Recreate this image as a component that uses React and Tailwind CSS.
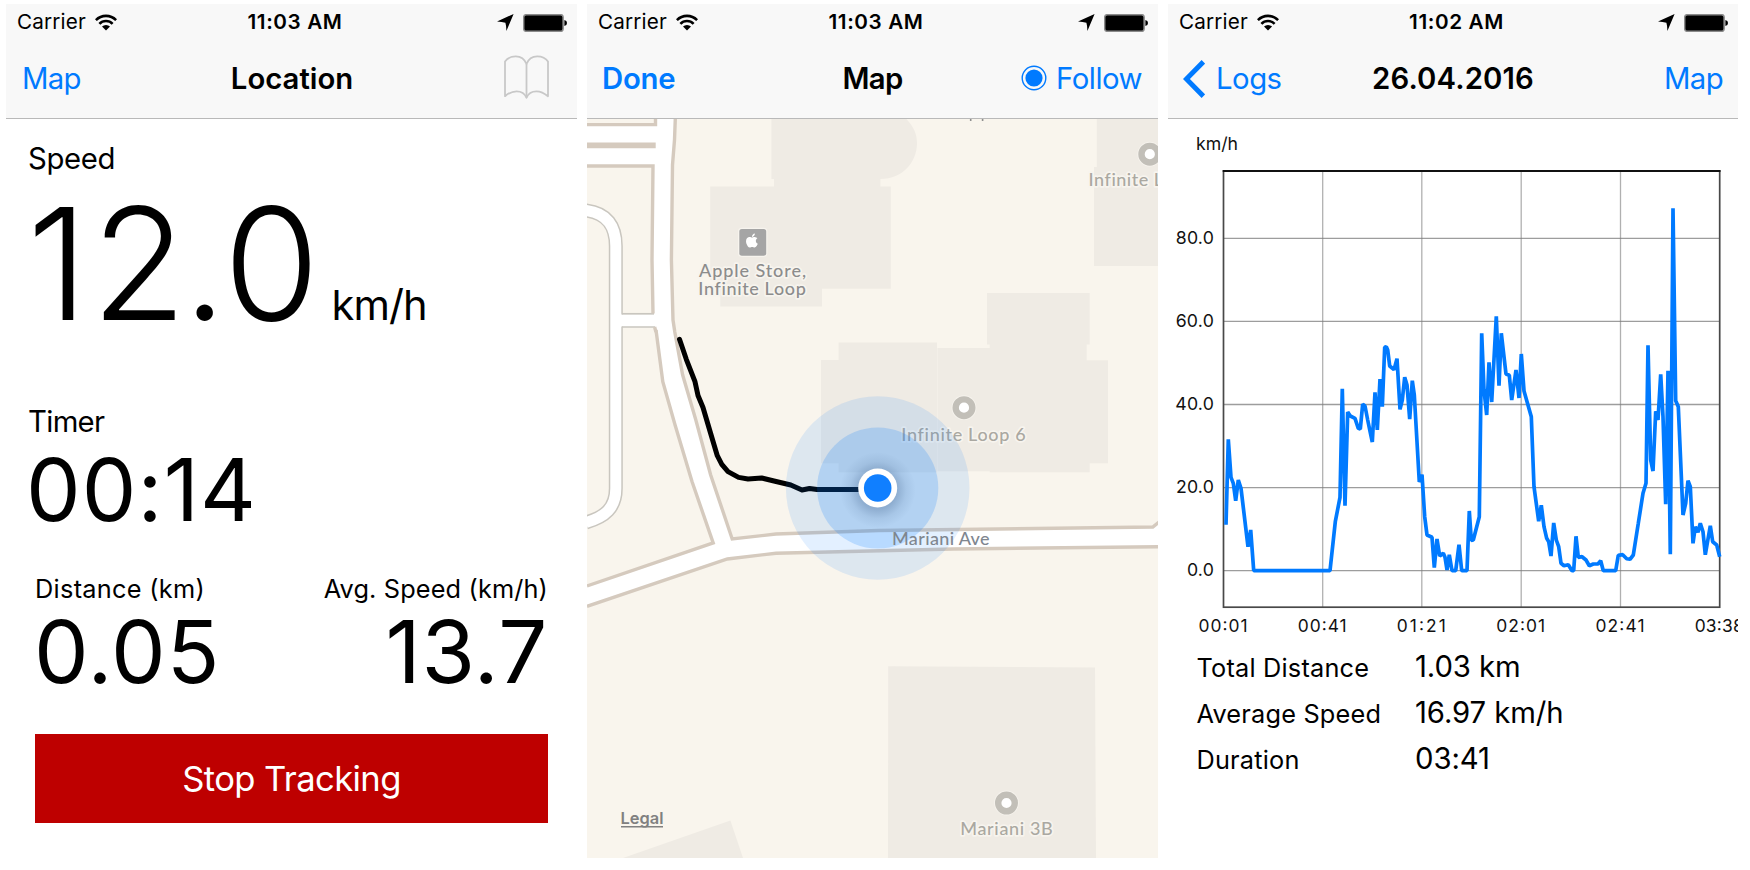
import React from "react";
import { FaApple } from "react-icons/fa";

function WifiIcon() {
  return (
    <svg className="h-[17px] w-[22px]" viewBox="0 0 22 17" fill="none" stroke="#000" strokeWidth="2.6">
      <path d="M0.9 6.1 A14.2 14.2 0 0 1 21.1 6.1" />
      <path d="M4.4 9.8 A9.2 9.2 0 0 1 17.6 9.8" />
      <path d="M11 16.6 L7 12.6 A5.6 5.6 0 0 1 15 12.6 Z" fill="#000" stroke="none" />
    </svg>
  );
}

function LocationArrow() {
  return (
    <svg className="h-[17px] w-[17px]" viewBox="0 0 17 17">
      <path d="M16.6 0 L0 7.4 Q5 7.6 8.4 8.7 Q9.4 12 9.4 17 Z" fill="#000" />
    </svg>
  );
}

function Battery() {
  return (
    <svg className="h-[18px] w-[44px]" viewBox="0 0 44 18">
      <rect x="0.7" y="0.7" width="39.4" height="16.6" rx="2.6" fill="#000" stroke="#8b8b8b" strokeWidth="1.5" />
      <path d="M41.4 6 Q44 6.6 44 9 Q44 11.4 41.4 12 Z" fill="#000" />
    </svg>
  );
}

function BookIcon() {
  return (
    <svg className="h-[44px] w-[45px]" viewBox="0 0 45 44" fill="none" stroke="#c8c8c8" strokeWidth="1.8" strokeLinejoin="round">
      <path d="M22.5 9 C20.5 4 16.5 1.4 11.8 1.4 C7.2 1.4 3.2 3.2 1 6.6 V41.2 C5 37.8 8.5 36.3 12.5 36.3 C17 36.3 20.8 38.4 22.5 42.8 C24.2 38.4 28 36.3 32.5 36.3 C36.5 36.3 40 37.8 44 41.2 V6.6 C41.8 3.2 37.8 1.4 33.2 1.4 C28.5 1.4 24.5 4 22.5 9 Z" />
      <path d="M22.5 9 V42.8" />
    </svg>
  );
}

function Header({ time, left, title, right }) {
  return (
    <header className="h-[115px] shrink-0 border-b border-[#b9b9b9] bg-[#f8f8f8]">
      <div className="grid h-[37px] grid-cols-[1fr_auto_1fr] items-center px-[11px] text-[20.7px] leading-none">
        <div className="flex items-center gap-[9px]">
          <span className="tracking-[0.16px]">Carrier</span>
          <WifiIcon />
        </div>
        <div className="pl-[7px] font-semibold tracking-[0.6px]">{time}</div>
        <div className="-mr-px flex items-center justify-end gap-[9px]">
          <LocationArrow />
          <Battery />
        </div>
      </div>
      <div className="grid h-[75px] grid-cols-[1fr_auto_1fr] items-center px-[15px] text-[29.3px] leading-none text-[#007aff]">
        <div className="flex items-center">{left}</div>
        <h1 className="font-semibold text-black">{title}</h1>
        <div className="flex items-center justify-end">{right}</div>
      </div>
    </header>
  );
}

function LocationScreen() {
  return (
    <section className="flex w-[571px] flex-col bg-white">
      <Header
        time="11:03 AM"
        left={<span className="ml-px tracking-[-0.7px]">Map</span>}
        title={<span className="ml-px">Location</span>}
        right={<div className="mr-[13px] -mt-[4px]"><BookIcon /></div>}
      />
      <div className="flex flex-col pr-[29px] pl-[22px]">
        <div className="mt-[25px] text-[29.3px] leading-[30px] tracking-[-0.35px]">Speed</div>
        <div className="mt-[30px] -ml-px flex h-[120px] items-baseline gap-[10px]">
          <span className="text-[155.5px] leading-[120px] font-light">
            <span className="tracking-[3px]">1</span>
            <span className="tracking-[-4px]">2</span>
            <span className="tracking-[-3px]">.</span>
            <span className="tracking-[2px]">0</span>
          </span>
          <span className="text-[41.6px] leading-none tracking-[-0.95px]">km/h</span>
        </div>
        <div className="mt-[83px] text-[29.3px] leading-[30px] tracking-[-0.69px]">Timer</div>
        <div className="mt-[8px] -ml-[2px] text-[86.7px] leading-[90px] tracking-[1.1px]">00:14</div>
        <div className="mt-[38.5px] flex justify-between pl-[6px]">
          <div>
            <div className="pl-px text-[25.3px] leading-[30px] tracking-[0.3px]">Distance (km)</div>
            <div className="mt-[3px] text-[86.7px] leading-[90px] tracking-[0.92px]">0.05</div>
          </div>
          <div className="text-right">
            <div className="text-[25.3px] leading-[30px] tracking-[0.15px]">Avg. Speed (km/h)</div>
            <div className="mt-[3px] text-[86.7px] leading-[90px] tracking-[0.7px]">13.7</div>
          </div>
        </div>
        <button className="mt-[37px] ml-[7px] h-[89.5px] bg-[#be0000] text-[34.6px] leading-none tracking-[-0.59px] text-white">
          Stop Tracking
        </button>
      </div>
    </section>
  );
}

function PlaceDot({ x, y }) {
  return (
    <g>
      <circle cx={x} cy={y} r="12.4" fill="#f6f3ed" />
      <circle cx={x} cy={y} r="8.3" fill="#fff" stroke="#c2bfb8" strokeWidth="6.4" />
    </g>
  );
}

function Label({ x, y, width, fill = "#aaa8a1", halo = "#f7f4ee", children }) {
  return (
    <text
      x={x} y={y} textLength={width} fill={fill} stroke={halo} strokeWidth="3.4" strokeLinejoin="round" paintOrder="stroke"
      className="font-['Lato',sans-serif] text-[18px] font-medium [font-variant-ligatures:none]"
    >
      {children}
    </text>
  );
}

const ROAD_LEFT = "656,330 662.8,381.7 675,424.7 692,481.6 713.2,542.9 587,586";
const ROAD_RIGHT = "676,100 674.5,140 672.5,165 671.4,260 673,320 674.8,332 682.6,374.8 695.7,419.6 710.6,474.7 732.2,539 775.9,534 878.5,530.5 1152.8,527 1159,522";
const ROAD_BOTTOM = "587,606.3 727.4,559 776,553.2 953,549 1159,546.7";

function MapCanvas() {
  return (
    <svg className="block h-[739px] w-[571px]" viewBox="587 119 571 739">
      <defs>
        <radialGradient id="dotShadow">
          <stop offset="0.5" stopColor="#20406b" stopOpacity="0.25" />
          <stop offset="0.75" stopColor="#20406b" stopOpacity="0.08" />
          <stop offset="1" stopColor="#20406b" stopOpacity="0" />
        </radialGradient>
      </defs>
      <rect x="587" y="119" width="571" height="739" fill="#f9f5ed" />

      <g fill="#efebe4">
        <path d="M771.4 119 H906.5 C914 127 917.3 135 917 144 C916.5 162 903 179 880.4 179 V186.5 H890.8 V288.7 H822 V306.5 H720.3 V280 H710.2 V186.5 H774 V179 H771.4 Z" />
        <path d="M1096.8 119 H1158 V266 H1094 V167 H1096.8 Z" />
        <path d="M838.6 342.4 H937 V472.3 H838.6 V463.3 H821 V360 H838.6 Z" />
        <path d="M937.4 348 H989.7 V344.5 H987 V293 H1089.7 V344.5 H1086.7 V360.3 H1108 V463.3 H1089.7 V472.3 H989.7 V471.2 H937.4 Z" />
        <path d="M888.2 666.2 L1095 667.6 L1096 858 H888 Z" />
        <path d="M623 858 L730.4 820.5 L743 858 Z" />
      </g>

      <g fill="#fff">
        <path d="M656 119 L676 119 L674.5 140 L672.5 165 L671.4 260 L673 320 L674.8 332 L682.6 374.8 L695.7 419.6 L710.6 474.7 L732.2 539 L775.9 534 L878.5 530.5 L1152.8 527 L1158 523 V546.7 L953 549 L776 553.2 L727.4 559 L587 606.3 V586 L713.2 542.9 L692 481.6 L675 424.7 L662.8 381.7 L656 330 L653 313 V166 L587 166 V124 H656 Z" />
        <rect x="622" y="314" width="36" height="12.5" />
      </g>
      <path d="M586 210.5 C607 213 615.8 226 615.8 246 V488.5 C615.8 508 605 517 586 522.5" fill="none" stroke="#c9c6bf" strokeWidth="14" />
      <path d="M586 210.5 C607 213 615.8 226 615.8 246 V488.5 C615.8 508 605 517 586 522.5" fill="none" stroke="#fff" strokeWidth="11" />
      <rect x="615" y="314.5" width="42" height="12" fill="#fff" />
      <g fill="none" stroke="#c9c6bf" strokeWidth="1.7">
        <path d="M622 313.8 H654" />
        <path d="M622 327 H655" />
      </g>

      <g fill="none" stroke="#d5cabe" strokeWidth="3.4">
        <path d="M587 124.6 H655.5 V117" />
        <path d="M587 145.4 H655.7" strokeWidth="5.8" />
        <path d="M587 166 H653 L652 260 L653 313.5" />
        <path d="M654.6 327 L656 332" />
        <polyline points={ROAD_LEFT} />
        <polyline points={ROAD_RIGHT} />
        <polyline points={ROAD_BOTTOM} />
      </g>

      <path d="M970.7 118 V121 M982.6 118 V121" stroke="#8f8f8f" strokeWidth="1.6" />

      <rect x="738" y="227.8" width="29.4" height="29.2" rx="4" fill="#f7f4ee" />
      <rect x="739.3" y="229" width="26.9" height="26.7" rx="2.5" fill="#a5a5a5" />
      <FaApple x="743.9" y="232.6" width="17.6" height="17.6" color="#fff" />
      <Label x="699" y="276.5" width="107" fill="#8c8c8c">Apple Store,</Label>
      <Label x="698.3" y="294.5" width="107.5" fill="#8c8c8c">Infinite Loop</Label>

      <PlaceDot x={1149.8} y={154.2} />
      <Label x="1088.6" y="186.3" width="106">Infinite Loop</Label>
      <PlaceDot x={964} y={407.7} />
      <Label x="901.3" y="441.3" width="124.5">Infinite Loop 6</Label>
      <PlaceDot x={1006.5} y={803} />
      <Label x="960.3" y="835.3" width="92.5">Mariani 3B</Label>

      <polyline
        points="679.5,339.3 686.3,359.3 695,381.7 698,395.5 703,407.5 710.6,433.3 717.3,455.7 721.8,464.3 728,471.6 738.6,477.4 748,479 761.7,478 774,481 790.8,485 802,490 809.5,488.5 817,489.5 862,489.5"
        fill="none" stroke="#000" strokeWidth="5" strokeLinecap="round" strokeLinejoin="round"
      />

      <circle cx="877.7" cy="488" r="91.8" fill="#007aff" fillOpacity="0.11" />
      <circle cx="877.7" cy="488" r="60.6" fill="#007aff" fillOpacity="0.19" />
      <circle cx="877.7" cy="490" r="38" fill="url(#dotShadow)" />
      <circle cx="877.7" cy="488" r="19.5" fill="#fff" />
      <circle cx="877.7" cy="488" r="13.8" fill="#107fff" />
      <text x="892" y="545.3" textLength="97.5" fill="#7f868f" className="font-['Lato',sans-serif] text-[18px] font-medium">Mariani Ave</text>
      <text x="620.5" y="824" textLength="43" fill="#808080" className="text-[16.4px] font-semibold">Legal</text>
      <path d="M621 826.7 H663" stroke="#808080" strokeWidth="1.5" />
    </svg>
  );
}

function MapScreen() {
  return (
    <section className="flex w-[571px] flex-col bg-white">
      <Header
        time="11:03 AM"
        left={<span className="font-semibold tracking-[-0.2px]">Done</span>}
        title={<span className="tracking-[-0.7px]">Map</span>}
        right={
          <div className="mr-px flex items-center gap-[9px]">
            <svg className="h-[26px] w-[26px]" viewBox="0 0 26 26">
              <circle cx="13" cy="13" r="11.8" fill="none" stroke="#007aff" strokeWidth="1.4" />
              <circle cx="13" cy="13" r="8.6" fill="#007aff" />
            </svg>
            <span className="tracking-[-0.5px]">Follow</span>
          </div>
        }
      />
      <MapCanvas />
    </section>
  );
}

// Ride samples traced on a 3x plotting grid, in two segments with their own origins.
const FIRST_HALF = [
  [33, 494], [40, 238], [48, 352], [55, 370], [62, 422], [70, 360], [78, 385], [99, 560], [107, 510], [116, 632], [345, 632],
  [361, 485], [375, 412], [382, 86], [390, 437], [398, 156], [406, 168], [420, 175], [430, 205], [436, 207], [443, 133],
  [450, 138], [458, 180], [466, 218], [472, 246], [480, 97], [487, 210], [495, 57], [502, 140], [509, -38], [514, -40],
  [518, -30], [524, 18], [537, 29], [546, -4], [555, 148], [562, 120], [569, 52], [576, 75], [584, 177], [592, 62], [598, 105],
  [613, 366], [621, 344], [629, 470], [636, 525], [651, 532], [658, 623], [666, 537], [674, 588], [685, 580], [690, 592],
  [696, 630], [703, 584], [711, 632], [722, 632], [732, 554], [740, 632], [756, 632], [763, 453], [769, 541], [775, 540], [793, 470],
];
const SECOND_HALF = [
  [58, 980], [65, 430], [72, 600], [80, 675], [87, 517], [95, 636], [109, 379], [117, 587], [124, 430], [138, 552],
  [148, 556], [155, 630], [168, 540], [177, 624], [184, 492], [192, 603], [214, 680], [222, 890], [236, 994], [244, 946],
  [252, 1010], [260, 1045], [266, 1055], [273, 1098], [281, 999], [289, 1050], [296, 1070], [303, 1120], [312, 1127],
  [325, 1124], [336, 1142], [341, 1142], [348, 1039], [355, 1102], [366, 1100], [378, 1110], [388, 1127], [400, 1122],
  [414, 1122], [422, 1112], [430, 1142], [467, 1142], [475, 1096], [488, 1094], [500, 1106], [510, 1108], [520, 1095],
  [535, 1000], [549, 910], [558, 880], [564, 466], [572, 810], [579, 843], [587, 664], [594, 690], [602, 553], [609, 680],
  [617, 943], [624, 542], [631, 1093], [639, 55], [647, 632], [655, 650], [669, 975], [677, 940], [684, 872], [691, 890],
  [699, 1060], [706, 1010], [714, 1027], [721, 1000], [729, 1025], [736, 1094], [751, 1007], [758, 1055], [770, 1065], [779, 1100],
];
const SPEED_LINE = [
  ...FIRST_HALF.map(([x, y]) => `${(1215 + x / 3).toFixed(1)},${(360 + y / 3).toFixed(1)}`),
  ...SECOND_HALF.map(([x, y]) => `${(1460 + x / 3).toFixed(1)},${(190 + y / 3).toFixed(1)}`),
].join(" ");

const Y_TICKS = [["80.0", 238.3], ["60.0", 321.3], ["40.0", 404.5], ["20.0", 487.6], ["0.0", 570.7]];
const X_TICKS = [["00:01", 1223.5], ["00:41", 1322.7], ["01:21", 1421.8], ["02:01", 1521.2], ["02:41", 1620.5], ["03:38", 1719.7]];

function SpeedChart() {
  return (
    <svg className="block h-[520px] w-[570px]" viewBox="1168 119 570 520">
      <g className="text-[17.7px]" fill="#111">
        <text x="1196" y="149.5" textLength="42">km/h</text>
        {Y_TICKS.map(([t, y]) => (
          <text key={t} x="1214" y={y + 5.4} textAnchor="end" letterSpacing="0.2">{t}</text>
        ))}
        {X_TICKS.map(([t, x]) => (
          <text key={t} x={x - 25} y="632.3" textLength="49" fontSize="17.4">{t}</text>
        ))}
      </g>
      <g stroke="#7c7c7c" strokeOpacity="0.75" strokeWidth="1.3">
        {Y_TICKS.map(([t, y]) => <line key={t} x1="1223.5" x2="1719.7" y1={y} y2={y} />)}
      </g>
      <g stroke="#7c7c7c" strokeOpacity="0.6" strokeWidth="1.3">
        {X_TICKS.slice(1, 5).map(([t, x]) => <line key={t} x1={x} x2={x} y1="171" y2="607" />)}
      </g>
      <rect x="1223.5" y="171" width="496.2" height="436.2" fill="none" stroke="#484848" strokeWidth="1.7" />
      <path d="M1222.7 171 H1720.5" stroke="#111" strokeWidth="1.8" />
      <polyline points={SPEED_LINE} fill="none" stroke="#007aff" strokeWidth="3.7" strokeLinejoin="bevel" />
    </svg>
  );
}

function Stat({ label, value }) {
  return (
    <div className="flex h-[46.2px] items-baseline leading-[46px]">
      <span className="w-[218.5px] text-[25.3px] tracking-[0.2px]">{label}</span>
      <span className="text-[29.3px] tracking-[-0.1px]">{value}</span>
    </div>
  );
}

function LogScreen() {
  return (
    <section className="flex w-[570px] flex-col overflow-hidden bg-white">
      <Header
        time="11:02 AM"
        left={
          <div className="flex items-center gap-[11px]">
            <svg className="h-[38px] w-[22px]" viewBox="0 0 22 38" fill="none" stroke="#007aff" strokeWidth="5">
              <path d="M20.4 1.8 L3.4 19 L20.4 36.2" />
            </svg>
            <span className="tracking-[-0.5px]">Logs</span>
          </div>
        }
        title={<span className="tracking-[0.14px]">26.04.2016</span>}
        right={<span className="tracking-[-0.6px]">Map</span>}
      />
      <SpeedChart />
      <div className="mt-[4.5px] flex flex-col pl-[28.5px]">
        <Stat label="Total Distance" value="1.03 km" />
        <Stat label="Average Speed" value="16.97 km/h" />
        <Stat label="Duration" value="03:41" />
      </div>
    </section>
  );
}

export default function App() {
  return (
    <main className="flex h-[870px] w-[1750px] gap-[10px] bg-white pt-[4px] pb-[12px] pl-[6px] font-['Inter',sans-serif] text-black">
      <LocationScreen />
      <MapScreen />
      <LogScreen />
    </main>
  );
}
